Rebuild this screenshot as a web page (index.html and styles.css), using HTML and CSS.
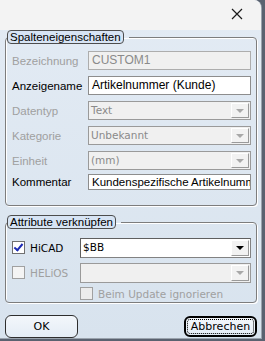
FILE: index.html
```html
<!DOCTYPE html>
<html lang="de">
<head>
    <meta charset="UTF-8">
    <title>Spalteneigenschaften</title>
    <link rel="stylesheet" href="styles.css">
</head>
<body>
<div class="window">
    <div class="titlebar">
        <svg class="close" width="12" height="12" viewBox="0 0 12 12">
            <path d="M1 1 L11 11 M11 1 L1 11" stroke="#1a1a1a" stroke-width="1.2" fill="none"/>
        </svg>
    </div>
    <div class="content">
        <fieldset class="group group-props">
            <legend>Spalteneigenschaften</legend>
            <div class="row">
                <span class="label disabled">Bezeichnung</span>
                <div class="field field-disabled">CUSTOM1</div>
            </div>
            <div class="row">
                <span class="label">Anzeigename</span>
                <div class="field">Artikelnummer (Kunde)</div>
            </div>
            <div class="row">
                <span class="label disabled">Datentyp</span>
                <div class="combo combo-disabled"><span class="combo-text">Text</span><span class="combo-btn"><i class="arrow"></i></span></div>
            </div>
            <div class="row">
                <span class="label disabled">Kategorie</span>
                <div class="combo combo-disabled"><span class="combo-text">Unbekannt</span><span class="combo-btn"><i class="arrow"></i></span></div>
            </div>
            <div class="row">
                <span class="label disabled">Einheit</span>
                <div class="combo combo-disabled"><span class="combo-text">(mm)</span><span class="combo-btn"><i class="arrow"></i></span></div>
            </div>
            <div class="row row-last">
                <span class="label">Kommentar</span>
                <div class="field field-small">Kundenspezifische Artikelnummer</div>
            </div>
        </fieldset>

        <fieldset class="group group-attr">
            <legend>Attribute verknüpfen</legend>
            <div class="row">
                <label class="check-label"><span class="check checked"></span>HiCAD</label>
                <div class="combo combo-wide"><span class="combo-text">$BB</span><span class="combo-btn"><i class="arrow arrow-dark"></i></span></div>
            </div>
            <div class="row">
                <label class="check-label disabled"><span class="check"></span>HELiOS</label>
                <div class="combo combo-wide combo-disabled"><span class="combo-text"></span><span class="combo-btn"><i class="arrow"></i></span></div>
            </div>
            <div class="row row-update">
                <label class="check-label check-free disabled"><span class="check"></span>Beim Update ignorieren</label>
            </div>
        </fieldset>

        <div class="buttons">
            <button class="btn">OK</button>
            <button class="btn btn-default"><span class="focus">Abbrechen</span></button>
        </div>
    </div>
</div>
</body>
</html>
```

FILE: styles.css
```css
body {
    margin: 0;
    background-color: #5a6270;
    font-family: "Liberation Sans", Arial, sans-serif;
    font-size: 11px;
    color: #000;
}
.window {
    width: 262px;
    height: 339px;
    background: linear-gradient(#e3ebf4, #d8e3ee);
    border-right: 1px solid #9aa3ad;
    border-bottom: 1px solid #9aa3ad;
    border-top-right-radius: 8px;
    box-sizing: border-box;
    overflow: hidden;
}
.titlebar {
    height: 30px;
    background-color: #f3f3f3;
    position: relative;
}
.close {
    position: absolute;
    left: 231px;
    top: 8px;
}
.content {
    padding: 0 4px 0 5px;
}
.group {
    margin: 0;
    min-width: 0;
    border: 1px solid #7d7d7d;
    border-radius: 4px;
    box-shadow: inset 1px 1px 0 #fff, 1px 1px 0 #fff;
    padding: 0 5px 0 6px;
}
.group legend {
    padding: 0 2px 0 2px;
    border: 1px solid #4d4d4d;
    border-radius: 4px;
    background-color: #d7e4f4;
    font-size: 11.5px;
    line-height: 12px;
    height: 14px;
    box-sizing: border-box;
    position: relative;
    left: -5px;
}
.group-props {
    height: 176px;
    padding-top: 7px;
    box-sizing: border-box;
}
.group-attr {
    margin-top: 9px;
    height: 88px;
    padding-top: 9px;
    box-sizing: border-box;
}
.row {
    display: flex;
    align-items: center;
    height: 19px;
    margin-bottom: 6px;
}
.row-last {
    margin-top: -4px;
}
.label {
    width: 76px;
    flex-shrink: 0;
    font-size: 11.5px;
}
.disabled {
    color: #a0a0a0;
}
.field {
    flex: 1;
    min-width: 0;
    height: 19px;
    box-sizing: border-box;
    border: 1px solid #8d8d8d;
    background-color: #fff;
    padding: 1px 0 0 3px;
    font-size: 12px;
    line-height: 15px;
    white-space: nowrap;
    overflow: hidden;
}
.field-disabled {
    background-color: #f0f0f0;
    color: #8a8a8a;
    border-color: #adadad;
}
.field-small {
    height: 16px;
    line-height: 13px;
    font-size: 11.5px;
}
.combo {
    flex: 1;
    min-width: 0;
    height: 19px;
    box-sizing: border-box;
    display: flex;
    border: 1px solid #828282;
    border-top-color: #5f5f5f;
    border-left-color: #5f5f5f;
    background-color: #fff;
}
.combo-disabled {
    background-color: #f0f0f0;
    border-color: #9a9a9a;
    color: #8a8a8a;
}
.combo-text {
    flex: 1;
    padding-left: 2px;
    line-height: 17px;
    font-family: "DejaVu Sans", sans-serif;
    font-size: 10.5px;
}
.combo-btn {
    width: 16px;
    margin: 1px;
    background-color: #f2f2f2;
    border: 1px solid #fff;
    border-right-color: #9a9a9a;
    border-bottom-color: #9a9a9a;
    display: flex;
    align-items: center;
    justify-content: center;
}
.arrow {
    width: 0;
    height: 0;
    border-left: 4px solid transparent;
    border-right: 4px solid transparent;
    border-top: 4px solid #a8a8a8;
}
.arrow-dark {
    border-top-color: #000;
}
.combo-wide {
    height: 20px;
}
.check-label {
    width: 68px;
    flex-shrink: 0;
    display: flex;
    align-items: center;
    font-family: "DejaVu Sans", sans-serif;
    font-size: 10.5px;
    white-space: nowrap;
}
.check-free {
    width: auto;
}
.check {
    width: 11px;
    height: 11px;
    flex-shrink: 0;
    border: 1px solid #a0a0a0;
    background-color: #f4f4f4;
    margin-right: 5px;
    position: relative;
}
.check.checked {
    border-color: #707070;
    background-color: #fff;
}
.check.checked::after {
    content: "";
    position: absolute;
    left: 3px;
    top: 0px;
    width: 3px;
    height: 7px;
    border-right: 2px solid #1c2bb5;
    border-bottom: 2px solid #1c2bb5;
    transform: rotate(40deg);
}
.row-update {
    padding-left: 68px;
    height: 13px;
    margin-top: -1px;
}
.row-update .check {
    background-color: #ececec;
}
.buttons {
    display: flex;
    justify-content: space-between;
    margin-top: 12px;
}
.btn {
    width: 73px;
    height: 23px;
    border: 1px solid #2e2e2e;
    border-radius: 6px;
    background: linear-gradient(#f3f7fb, #e4ecf5);
    font-family: "DejaVu Sans", sans-serif;
    font-size: 11px;
    color: #000;
    padding: 0;
}
.btn-default {
    height: 21px;
    margin-top: 1px;
    border-width: 2px;
    border-color: #000;
    padding: 1px;
}
.focus {
    display: block;
    height: 100%;
    box-sizing: border-box;
    border: 1px dotted #000;
    border-radius: 3px;
    line-height: 13px;
}
```
